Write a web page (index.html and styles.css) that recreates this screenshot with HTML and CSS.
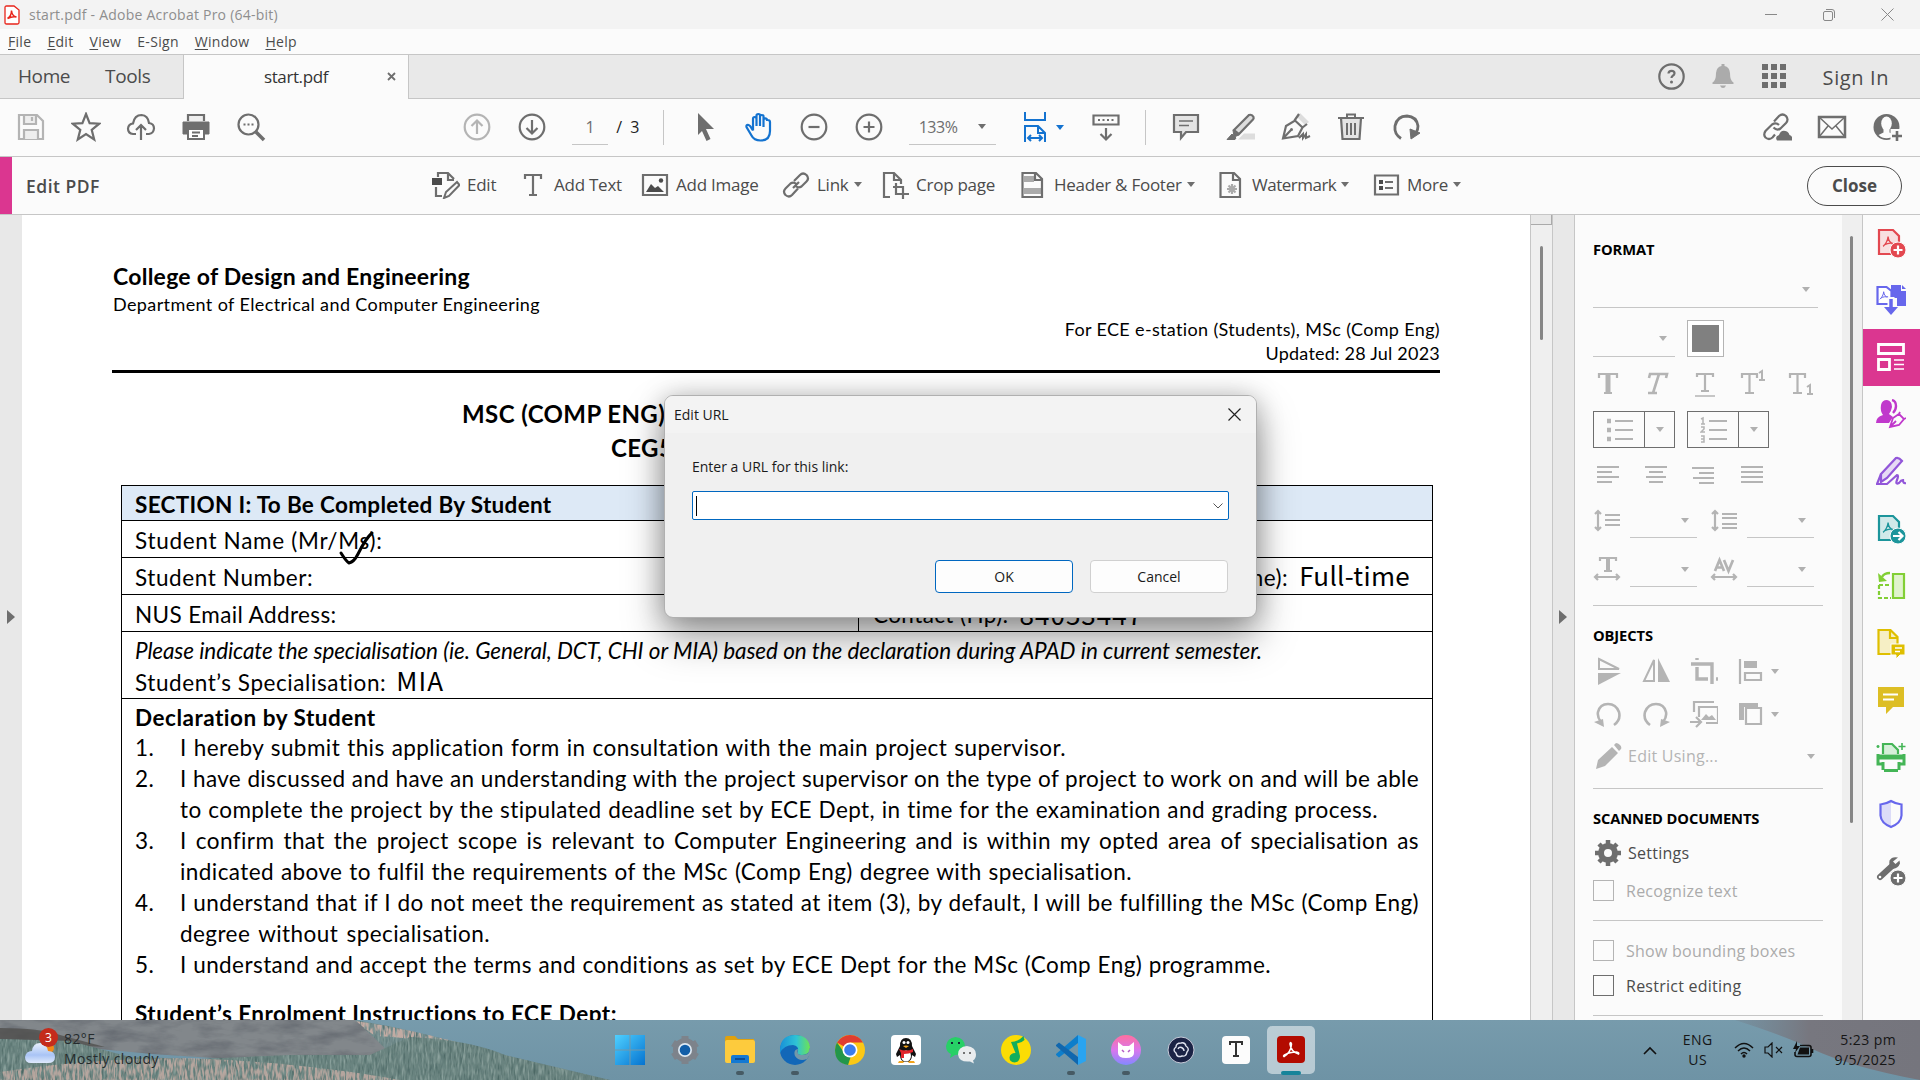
FILE: index.html
```
<!DOCTYPE html>
<html lang="en">
<head>
<meta charset="utf-8">
<title>start.pdf - Adobe Acrobat Pro (64-bit)</title>
<link rel="stylesheet" href="styles.css">
</head>
<body>
<svg width="0" height="0" class="defs">
  <symbol id="arr" viewBox="0 0 8 5"><path d="M0 0h8L4 5z" fill="currentColor"/></symbol>
  <symbol id="pdfmark" viewBox="0 0 12 12"><path d="M1 10.500c2-1.500 4.500-5.500 4.600-9C6 5.500 8 8 11 8M2.500 9C5 7.500 8 7 11 8" fill="none" stroke="currentColor" stroke-width="1.200"/></symbol>
</svg>

<header class="titlebar">
  <svg class="appicon" width="16" height="20" viewBox="0 0 16 20"><path d="M1 2.500Q1 1 2.500 1H10l5 4v12.500q0 1.500-1.500 1.500h-11Q1 19 1 17.500z" fill="#fff" stroke="#e8251b" stroke-width="1.300"/><path d="M3.500 13.500c2.500-1.500 4-5 4-8 .3 4 2 6 5 6.500-3-.8-6 0-9 1.500z" fill="none" stroke="#e8251b" stroke-width="1.500"/></svg>
  <span class="apptitle">start.pdf - Adobe Acrobat Pro (64-bit)</span>
  <div class="winbtns">
    <svg width="12" height="12" viewBox="0 0 12 12"><path d="M0 5.500h12"/></svg>
    <svg width="12" height="12" viewBox="0 0 12 12"><rect x=".5" y="2.500" width="9" height="9" rx="1.500"/><path d="M3 .5h6q2.500 0 2.500 2.500v6"/></svg>
    <svg width="13" height="13" viewBox="0 0 13 13"><path d="M.5.500l12 12M12.500.500l-12 12"/></svg>
  </div>
</header>

<nav class="menubar"><span><u>F</u>ile</span><span><u>E</u>dit</span><span><u>V</u>iew</span><span>E-Sign</span><span><u>W</u>indow</span><span><u>H</u>elp</span></nav>

<div class="tabbar">
  <div class="hometabs"><span>Home</span><span>Tools</span></div>
  <div class="doctab"><span>start.pdf</span><svg width="9" height="9" viewBox="0 0 9 9"><path d="M1 1l7 7M8 1L1 8" stroke="#6e6e6e" stroke-width="1.800"/></svg></div>
  <div class="account">
    <svg class="i-help" width="27" height="27" viewBox="0 0 27 27"><circle cx="13.500" cy="13.500" r="12.200" fill="none" stroke="#6e6e6e" stroke-width="2.200"/><path d="M10.500 10.500q0-2.700 3-2.700t3 2.500q0 1.500-1.700 2.500-1.300.8-1.300 2.300" fill="none" stroke="#6e6e6e" stroke-width="2.200"/><circle cx="13.500" cy="19" r="1.500" fill="#6e6e6e"/></svg>
    <svg class="i-bell" width="22" height="26" viewBox="0 0 22 26"><path d="M9.500 3V1h3v2q5 1 5.500 7 0 8 3.500 9.500V21H.5v-1.500Q4 18 4 10q.5-6 5.500-7zM8 22.500h6q-1 2.500-3 2.500t-3-2.500z" fill="#ababab"/></svg>
    <svg class="i-grid" width="24" height="24" viewBox="0 0 24 24" fill="#6e6e6e"><path d="M0 0h6v6H0zM9 0h6v6H9zM18 0h6v6h-6zM0 9h6v6H0zM9 9h6v6H9zM18 9h6v6h-6zM0 18h6v6H0zM9 18h6v6H9zM18 18h6v6h-6z"/></svg>
    <span>Sign In</span>
  </div>
</div>

<div class="toolbar">
  <div class="cells">
    <svg viewBox="0 0 30 30" class="dim"><path d="M3 3h18l6 6v18H3z"/><path d="M8 4v8h12V4M16 5v4M8 27v-9h14v9" fill="#eee"/></svg>
    <svg viewBox="0 0 30 30"><path d="M15 2l3.600 9.200 9.600.5-7.500 6.200 2.500 9.600-8.200-5.400-8.200 5.400 2.500-9.600-7.500-6.200 9.600-.5z"/></svg>
    <svg viewBox="0 0 30 30"><path d="M10 22H7q-5-.5-5-5.500Q2.500 12 7 11.500 8.500 3 15.500 3 22 3.500 23 11q5 .5 5 5.500-.5 5-5 5.500h-3M15 28V13M10 18l5-5 5 5"/></svg>
    <svg viewBox="0 0 30 30"><path d="M7 9V3h16v6" fill="#eee"/><path d="M2 10h26v12h-5v-5H7v5H2z" fill="currentColor" stroke-width="1"/><path d="M7 17h16v10H7zM11 20.500h8M11 24h6" fill="#fff" stroke-width="2"/></svg>
    <svg viewBox="0 0 30 30"><circle cx="12.500" cy="12.500" r="10"/><path d="M20 20l8 8" stroke-width="3.500"/><path d="M7.500 12.500h2M11.500 12.500h2M15.500 12.500h2" stroke-width="2"/></svg>
  </div>
  <div class="cells pagenav">
    <svg viewBox="0 0 30 30" class="dim"><circle cx="15" cy="15" r="12.300"/><path d="M15 22V9M9.500 14L15 8.500l5.500 5.500"/></svg>
    <svg viewBox="0 0 30 30"><circle cx="15" cy="15" r="12.300"/><path d="M15 8v13M9.500 16l5.500 5.500 5.500-5.500"/></svg>
  </div>
  <div class="pageno">1</div><div class="pagetotal">/ &nbsp;3</div>
  <i class="vsep"></i>
  <div class="cells handset">
    <svg viewBox="0 0 30 30"><path d="M8 1l16 16h-8l4.500 10-4 2L12 19l-4 4z" fill="currentColor" stroke="none"/></svg>
    <svg viewBox="0 0 30 30" class="blue"><path d="M9 18.500V7q0-2 1.700-2T12.500 7v7V3.500Q12.500 2 14.300 2T16 3.500V14 4.500Q16 3 17.800 3t1.700 1.500V15 8q0-1.700 1.700-1.700T23 8h.5Q26 8 26 10v9q0 9.500-9.500 9.500-6.500 0-9-5L2.500 15q-.5-2 1.500-2.200 2 0 5 5.700"/></svg>
    <svg viewBox="0 0 30 30"><circle cx="15" cy="15" r="12.300"/><path d="M9.500 15h11"/></svg>
    <svg viewBox="0 0 30 30"><circle cx="15" cy="15" r="12.300"/><path d="M9.500 15h11M15 9.500v11"/></svg>
  </div>
  <div class="zoom"><span>133%</span><svg class="arrow"><use href="#arr"/></svg></div>
  <div class="fit">
    <svg viewBox="0 0 24 30" width="24" height="30" class="blue ln"><path d="M2 0v8h20V0M2 30V14h13l7 7v9M15 14v7h7M5 26h14M8 23l-3 3 3 3M16 23l3 3-3 3" stroke-width="2"/></svg>
    <svg class="arrow blue"><use href="#arr"/></svg>
    <svg viewBox="0 0 28 30" width="28" height="30" class="ln rul"><path d="M1.500 3.500h25v9h-25zM14 16v11M8.500 22l5.500 5.500 5.500-5.500"/><path d="M6 8h2M10.500 8h2M15 8h2M19.500 8h2" stroke-width="2"/></svg>
  </div>
  <i class="vsep"></i>
  <div class="cells marks">
    <svg viewBox="0 0 30 30"><path d="M3 3h24v17H15l-5 6v-6H3z" fill="#e4e4e4"/><path d="M8 9h14M8 13.500h10" stroke-width="1.500"/></svg>
    <svg viewBox="0 0 30 30"><path d="M12 27.500h17v-6H18z" fill="#ddd" stroke="none"/><path d="M8 18L23 3q3-1 4.500 2 .5 1.500-.5 2.500L13 22z" fill="#ddd"/><path d="M7 18l6 5-5 2zM6 22l4 4-1 1.500H1z" fill="currentColor" stroke-width="1"/></svg>
    <svg viewBox="0 0 30 30"><path d="M19 1l9 9-4 3-8-8z" fill="#ddd" stroke="none"/><path d="M2 26.500L5 14l9-5.500 7.500 7L17 24zM2 26.500l8-8.500M13.500 8.500L18 2M21.500 15.500L26 12"/><circle cx="10.500" cy="17.500" r="1.500" fill="currentColor" stroke="none"/><path d="M18 26l4-4v4l3-4v4l4-2" stroke-width="2"/></svg>
    <svg viewBox="0 0 30 30"><path d="M5 6l1.500 21h17L25 6" fill="#e4e4e4"/><path d="M2 6h26M11 5V2.500h8V5M11 11v12M15 11v12M19 11v12" stroke-width="2"/></svg>
    <svg viewBox="0 0 30 30"><path d="M10 26.500Q3 22 4 14 6 4 16 4q9.500.5 11 10 0 4-2 7" stroke-width="2.800"/><path d="M19 17l10 4-9 6z" fill="currentColor" stroke-width="1"/></svg>
  </div>
  <div class="cells share">
    <svg viewBox="0 0 30 30"><path d="M12 9.500l5-5.500q3.500-3 7 0 3 3.500 0 7l-5.500 5.500q-3.500 2.500-7-1M17 13q-3-3-7-.5L3.500 19q-2.500 3.500 0 6.500 3.500 3 7 0l2.500-3"/><path d="M15 28.500q-2.500-4 2-5.500 2-6 8-3.500 2 1 2.500 3.500 4 1.500 2.500 5.500z" fill="currentColor" stroke="none"/></svg>
    <svg viewBox="0 0 30 30"><path d="M2 5h26v20H2z" stroke-width="2.500"/><path d="M2 5l13 12L28 5M2 25l9-11M28 25l-9-11" stroke-width="1.500"/></svg>
    <svg viewBox="0 0 30 30"><defs><clipPath id="head"><circle cx="14.500" cy="15" r="11.200"/></clipPath></defs><circle cx="14.500" cy="15" r="13" fill="currentColor" stroke="none"/><g clip-path="url(#head)"><ellipse cx="14.500" cy="11.500" rx="5.300" ry="7" fill="#fbfbfb" stroke="none"/><path d="M11.500 16h6v4.500l8 4v6h-22v-6l8-4z" fill="#fbfbfb" stroke="none"/></g><path d="M18.500 17H31v13H18.500z" fill="#fbfbfb" stroke="none"/><path d="M25 19v10M20 24h10" stroke-width="2.600"/></svg>
  </div>
</div>

<div class="editbar">
  <div class="edittitle">Edit PDF</div>
  <div class="edittools">
    <div><svg viewBox="0 0 28 28"><path d="M6 6V2h10l6 6M16 2v7h6M4 16v9h6"/><path d="M0 7h10v7H0z" fill="currentColor" stroke="none"/><path d="M12 27l2-6 11-10 2.500 3-10.500 11z" stroke-width="2"/></svg>Edit</div>
    <div><svg viewBox="0 0 28 28"><path d="M6 8V4h16v4M14 4v20M10 24h8"/></svg>Add Text</div>
    <div><svg viewBox="0 0 28 28"><path d="M2 4h24v20H2z"/><path d="M5 21l5-8 4 4 3-2 6 6z" fill="currentColor" stroke="none"/><circle cx="20" cy="9.500" r="2.200" fill="currentColor" stroke="none"/></svg>Add Image</div>
    <div><svg viewBox="0 0 28 28"><path d="M12 10l6-6q3-3 6.500 0 3 3.500 0 6.500l-5 5q-3 2-6-.5M16 17.500l-6 6.500q-3 3-6.500 0-3-3.500 0-6.500l5-5q3-2 6 .5M11 17l6-6"/></svg>Link<svg class="arrow"><use href="#arr"/></svg></div>
    <div><svg viewBox="0 0 28 28"><path d="M9 26H3V2h10l7 7v4M13 2v7h7M12 16h10v12M15 12v11h13"/></svg>Crop page</div>
    <div><svg viewBox="0 0 28 28"><path d="M5 5h10v6H5zM5 17h17v6H5z" fill="#aaa" stroke="none"/><path d="M3.500 2H17l6 6v18H3.500zM16 2v7h7"/></svg>Header &amp; Footer<svg class="arrow"><use href="#arr"/></svg></div>
    <div class="wm"><svg viewBox="0 0 28 28"><path d="M3.500 2H17l6 6v18H3.500zM16 2v7h7"/><path d="M15 13v10M10 18h10M11.500 14.500l7 7M18.500 14.500l-7 7" stroke="#aaa"/></svg>Watermark<svg class="arrow"><use href="#arr"/></svg></div>
    <div><svg viewBox="0 0 28 28"><path d="M3 4.500h23v19H3zM13 11h8M13 17h8"/><path d="M7 9h4v4H7zM7 15h4v4H7z" fill="currentColor" stroke="none"/></svg>More<svg class="arrow"><use href="#arr"/></svg></div>
  </div>
  <button class="closebtn">Close</button>
</div>

<main class="work">
  <div class="gutter left"><svg width="8" height="14" viewBox="0 0 8 14"><path d="M0 0l8 7-8 7z" fill="#6e6e6e"/></svg></div>
  <article class="page">
    <div class="college">College of Design and Engineering</div>
    <div class="dept">Department of Electrical and Computer Engineering</div>
    <div class="form-ref">For ECE e-station (Students), MSc (Comp Eng)<br><span>Updated: 28 Jul 2023</span></div>
    <div class="doctitle"><div>MSC (COMP ENG)</div><div class="code">CEG5</div></div>
    <div class="form">
      <div class="row section">SECTION I: To Be Completed By Student</div>
      <div class="row name"><span class="fill">Student Name (Mr/Ms):</span><svg class="tick" width="38" height="38" viewBox="0 0 38 38"><path d="M3 24q5 8 8 10 5-1 9-9Q28 9 34 4" fill="none" stroke="#000" stroke-width="3" stroke-linecap="round"/></svg></div>
      <div class="row number"><span>Student Number:</span><span class="mode">(Full-time/Part-time):</span><span class="typed">Full-time</span></div>
      <div class="row nus"><div class="left-cell">NUS Email Address:</div><div class="right-cell">Contact (Hp):<span class="typed hp">84053447</span></div></div>
      <div class="row spec"><div class="note">Please indicate the specialisation (ie. General, DCT, CHI or MIA) based on the declaration during APAD in current semester.</div><div class="specline">Student’s Specialisation:<span class="typed mia">MIA</span></div></div>
      <div class="decl">
        <b>Declaration by Student</b>
        <ol>
          <li><p style="width:886px">I hereby submit this application form in consultation with the main project supervisor.</p></li>
          <li><p class="tight">I have discussed and have an understanding with the project supervisor on the type of project to work on and will be able</p><p style="width:1198px">to complete the project by the stipulated deadline set by ECE Dept, in time for the examination and grading process.</p></li>
          <li><p>I confirm that the project scope is relevant to Computer Engineering and is within my opted area of specialisation as</p><p style="width:952px">indicated above to fulfil the requirements of the MSc (Comp Eng) degree with specialisation.</p></li>
          <li><p>I understand that if I do not meet the requirement as stated at item (3), by default, I will be fulfilling the MSc (Comp Eng)</p><p style="width:310px">degree without specialisation.</p></li>
          <li><p style="width:1091px">I understand and accept the terms and conditions as set by ECE Dept for the MSc (Comp Eng) programme.</p></li>
        </ol>
        <b class="enrol">Student’s Enrolment Instructions to ECE Dept:</b>
      </div>
    </div>
  </article>
  <div class="docscroll"><i class="cap"></i><i class="thumb"></i></div>
  <div class="gutter right"><svg width="8" height="14" viewBox="0 0 8 14"><path d="M0 0l8 7-8 7z" fill="#6e6e6e"/></svg></div>

  <aside class="panel">
    <h3>FORMAT</h3>
    <div class="dd wide"><svg class="arrow"><use href="#arr"/></svg></div>
    <div class="sizerow"><div class="dd"><svg class="arrow"><use href="#arr"/></svg></div><div class="swatch"><i></i></div></div>
    <div class="icons5">
      <svg viewBox="0 0 28 28"><path d="M5 9V5h18v4M10 24h8"/><path d="M14 5v19" stroke-width="5"/></svg>
      <svg viewBox="0 0 28 28"><path d="M7 9l1-4h17l-1 4M17 5l-6 19M6 24h9" stroke-width="2.600"/></svg>
      <svg viewBox="0 0 28 28"><path d="M6 8V5h16v3M14 5v17M10 22h8"/><path d="M4 27h20" stroke-width="1.500"/></svg>
      <svg viewBox="0 0 28 28"><path d="M3 9V5h15v4M10.500 5v19M6 24h9"/><path d="M20 4l3-2v9M20 11h6" stroke-width="2"/></svg>
      <svg viewBox="0 0 28 28"><path d="M3 9V5h15v4M10.500 5v19M6 24h9"/><path d="M20 18l3-2v9M20 25h6" stroke-width="2"/></svg>
    </div>
    <div class="lists">
      <div class="split"><svg viewBox="0 0 28 28"><path d="M9 5h18M9 14h18M9 23h18"/><path d="M1 5h4M1 14h4M1 23h4" stroke-width="4.500"/></svg><span><svg class="arrow"><use href="#arr"/></svg></span></div>
      <div class="split"><svg viewBox="0 0 28 28"><path d="M9 5h18M9 14h18M9 23h18"/><path d="M1 3l2-1v6M1 8h4M1 11h3v2l-3 3h4M1 20h3v6H1M1 23h3" stroke-width="1.500"/></svg><span><svg class="arrow"><use href="#arr"/></svg></span></div>
    </div>
    <div class="icons4 aligns">
      <svg viewBox="0 0 28 28"><path d="M3 6h22M3 11h15M3 16h22M3 21h15"/></svg>
      <svg viewBox="0 0 28 28"><path d="M3 6h22M7 11h14M4 16h20M7 21h14"/></svg>
      <svg viewBox="0 0 28 28"><path d="M2 7h22M9 12h15M3 17h21M9 22h15"/></svg>
      <svg viewBox="0 0 28 28"><path d="M3 6h22M3 11h22M3 16h22M3 21h22"/></svg>
    </div>
    <div class="spacings">
      <svg viewBox="0 0 28 28"><path d="M5 5v19M2 8l3-3 3 3M2 21l3 3 3-3M12 9h15M12 14h15M12 19h15"/></svg><div class="dd"><svg class="arrow"><use href="#arr"/></svg></div>
      <svg viewBox="0 0 28 28"><path d="M5 5v19M2 8l3-3 3 3M2 21l3 3 3-3M12 8h15M12 12h15M12 18h15M12 22h15"/></svg><div class="dd"><svg class="arrow"><use href="#arr"/></svg></div>
      <svg viewBox="0 0 28 28"><path d="M7 6V3h16v3M11 16h8M2 22h24M5 19l-3 3 3 3M23 19l3 3-3 3"/><path d="M15 3v13" stroke-width="4"/></svg><div class="dd"><svg class="arrow"><use href="#arr"/></svg></div>
      <svg viewBox="0 0 28 28"><path d="M5 16L9.500 5 14 16M6.500 12.500h6M14 5l4.500 11L23 5" stroke-width="2.700"/><path d="M2 22h24M5 19l-3 3 3 3M23 19l3 3-3 3"/></svg><div class="dd"><svg class="arrow"><use href="#arr"/></svg></div>
    </div>
    <hr>
    <h3>OBJECTS</h3>
    <div class="icons4 objs">
      <svg viewBox="0 0 28 28"><path d="M5 2l20 10H5z" stroke-width="2"/><path d="M4 16h23L4 28z" fill="currentColor" stroke="none"/></svg>
      <svg viewBox="0 0 28 28"><path d="M12 3v21H2z" stroke-width="2"/><path d="M16 1l12 24H16z" fill="currentColor" stroke="none"/></svg>
      <svg viewBox="0 0 28 28"><path d="M1 7h21v20M7 10v12h11M26 22h2M7 1v2" stroke-width="3.400"/></svg>
      <svg viewBox="0 0 28 28"><path d="M2 2v25M7 16h16v7H7z"/><path d="M6 4h13v7H6z" fill="currentColor" stroke="none"/></svg><svg class="arrow"><use href="#arr"/></svg>
      <svg viewBox="0 0 28 28"><path d="M20 25q7-5 5-13-3-8-11-8-8 0-10 8-1 5 3 10" stroke-width="2.600"/><path d="M0 22l9-3 1 8z" fill="currentColor" stroke="none"/></svg>
      <svg viewBox="0 0 28 28"><path d="M8 25q-7-5-5-13 3-8 11-8 8 0 10 8 1 5-3 10" stroke-width="2.600"/><path d="M28 22l-9-3-1 8z" fill="currentColor" stroke="none"/></svg>
      <svg viewBox="0 0 28 28"><path d="M4 12V2h20M9 17V7h19v16H16M0 22h10M6 17l5 5-5 5"/><path d="M11 20l5-6 3 3 3-2 4 5z" fill="currentColor" stroke="none"/></svg>
      <svg viewBox="0 0 28 28"><path d="M8 8h15v16H8z"/><path d="M1 3h19v4H6v13H1z" fill="currentColor" stroke="none"/></svg><svg class="arrow"><use href="#arr"/></svg>
    </div>
    <div class="using"><svg viewBox="0 0 28 28"><path d="M2 27l2-9L18 5l6 6L11 24zM20 3l2-2q2 0 4 2t1 4l-2 2z" fill="currentColor" stroke="none"/></svg><span>Edit Using...</span><svg class="arrow"><use href="#arr"/></svg></div>
    <hr>
    <h3>SCANNED DOCUMENTS</h3>
    <div class="settings"><svg viewBox="0 0 28 28"><circle cx="14" cy="14" r="7" stroke-width="6"/><path d="M14 1v5M14 22v5M1 14h5M22 14h5M5 5l3 3M20 20l3 3M5 23l3-3M20 8l3-3" stroke-width="4.500"/></svg><span>Settings</span></div>
    <label class="check off"><i></i>Recognize text</label>
    <hr>
    <label class="check off two"><i></i>Show bounding boxes</label>
    <label class="check three"><i></i>Restrict editing</label>
    <hr>
  </aside>
  <div class="panelscroll"><i></i></div>
  <aside class="rail">
    <div style="color:#e34850"><svg viewBox="0 0 30 30"><path d="M3 2h14l6 6v18H3z" fill="#f8dfe0"/><svg x="6" y="7" width="13" height="13"><use href="#pdfmark"/></svg><circle cx="22" cy="22" r="8" fill="currentColor" stroke="#fbfbfb" stroke-width="1"/><path d="M22 17.500v9M17.500 22h9" stroke="#fff"/></svg></div>
    <div style="color:#6767ec"><svg viewBox="0 0 30 30"><path d="M15 0h10v6h5v15h-9v-8h-6z" fill="currentColor" stroke="none"/><path d="M26 0l4 4h-4z" fill="currentColor" stroke="none"/><path d="M1.500 2h9l5 4v13h-14z" fill="#fff"/><svg x="3" y="5" width="10" height="11"><use href="#pdfmark"/></svg><path d="M15 12v15" stroke="#fbfbfb" stroke-width="7"/><path d="M15 14v10" stroke-width="3.500"/><path d="M8 22h14l-7 8z" fill="currentColor" stroke="none"/></svg></div>
    <div class="on"><svg viewBox="0 0 30 30"><path d="M2.500 2.500h25v9h-25zM2.500 17.500h11v10h-11z" stroke-width="2.800"/><path d="M18 18h10M18 22.500h10M18 27h10" stroke-width="1.600"/></svg></div>
    <div style="color:#c038cc"><svg viewBox="0 0 30 30"><path d="M0 24q0-6 7-8-3-4-2-10 1-5 6-5 5 1 5 7-1 5-3 7l4 3-4 6z" fill="currentColor" stroke="none"/><path d="M16 1q4 1 4 6 0 4-3 7" stroke-width="2.400"/><path d="M14 28l3-9 6-4 5 5-5 6zM14 28l6-6M23 15l1-2M28 20l2-1" stroke-width="1.800" fill="#fbfbfb"/></svg></div>
    <div style="color:#9256d9"><svg viewBox="0 0 30 30"><path d="M5 18L20 2q3-1 6 3L11 22l-6 4z" fill="#e6daf5"/><path d="M5 18L1 28h10l10-9q2 0 0 5t2 3q2-3 4-3 0 4 3 3"/></svg></div>
    <div style="color:#1c959b"><svg viewBox="0 0 30 30"><path d="M3 2h14l6 6v18H3z" fill="#d0e9e9"/><svg x="6" y="7" width="13" height="13"><use href="#pdfmark"/></svg><circle cx="22" cy="22" r="8" fill="currentColor" stroke="#fbfbfb" stroke-width="1"/><path d="M17 22h9M22.500 18l4 4-4 4" stroke="#fff"/></svg></div>
    <div style="color:#82cf35"><svg viewBox="0 0 30 30"><path d="M17 3h11v24H17z" fill="#e0f3cd"/><path d="M3 14h10M3 14v13h12" stroke-dasharray="4 2"/><path d="M14 2Q8 2 6 6" stroke-width="2.500"/><path d="M2 2l1 9 8-1z" fill="currentColor" stroke="none"/></svg></div>
    <div style="color:#dfbf00"><svg viewBox="0 0 30 30"><path d="M2.500 2h12l7 7v17h-19z" fill="#f6efc5"/><path d="M14 2v8h8" /><path d="M15 16h14v11h-5l-4 4v-4h-5z" fill="currentColor" stroke="#fbfbfb" stroke-width="1"/><path d="M19 20h7M19 23.500h5" stroke="#fff" stroke-width="1.500"/></svg></div>
    <div style="color:#ddbe24"><svg viewBox="0 0 30 30"><path d="M2 2h26v20H17l-7 7v-7H2z" fill="currentColor" stroke="none"/><path d="M7 9.500h15M7 14.500h11" stroke="#fff" stroke-width="2"/></svg></div>
    <div style="color:#44b556"><svg viewBox="0 0 30 30"><path d="M7 12V2h9l6 6v4" fill="#d5efd9"/><path d="M2 12v10h4M28 12v10h-4M7 20v8M23 20v8M8 28.500h14" stroke-width="3"/><path d="M1 15h28" stroke-width="5"/><path d="M26 1v7M22.500 4.500h7M2 3v3M.5 4.500h3" stroke-width="1.600"/></svg></div>
    <div style="color:#6767ec"><svg viewBox="0 0 30 30"><path d="M15 2L4.500 5.500v11Q5 24 15 28z" fill="#dcdcf8" stroke="none"/><path d="M15 2q5 3 10.500 3.500v11Q25 24 15 28 5 24 4.500 16.500v-11Q10 5 15 2z"/></svg></div>
    <div style="color:#6e6e6e"><svg viewBox="0 0 30 30"><path d="M4 21L16 10" stroke-width="6" stroke-linecap="round"/><path d="M22 1.500q-6-1.500-8.500 3-1 5 2.500 8 5.500 1 8-5l-.5-3-4 3.500-2.500-2.500z" fill="currentColor" stroke="none"/><circle cx="4" cy="21" r="1.300" fill="#fff" stroke="none"/><circle cx="22" cy="22" r="8" fill="currentColor" stroke="#fbfbfb" stroke-width="1"/><path d="M22 17.500v9M17.500 22h9" stroke="#fff"/></svg></div>
  </aside>
</main>

<section class="dialog">
  <div class="dtitle"><span>Edit URL</span><svg width="13" height="13" viewBox="0 0 13 13"><path d="M.5.500l12 12M12.500.500l-12 12" stroke="#222" stroke-width="1.200"/></svg></div>
  <div class="dbody">
    <div class="dlabel">Enter a URL for this link:</div>
    <div class="combo"><i></i><svg width="10" height="6" viewBox="0 0 10 6"><path d="M.5.500L5 5l4.500-4.500" fill="none" stroke="#555"/></svg></div>
    <div class="dbtns"><button class="ok">OK</button><button>Cancel</button></div>
  </div>
</section>

<footer class="taskbar">
  <svg class="wall" viewBox="0 0 1920 60" width="1920" height="60">
    <defs>
      <linearGradient id="sky" x1="0" y1="0" x2="0" y2="1"><stop offset="0" stop-color="#779bac"/><stop offset="1" stop-color="#6e93a5"/></linearGradient>
      <linearGradient id="patch" x1="0" y1="0" x2="1" y2="0"><stop offset="0" stop-color="#747f8b" stop-opacity=".3"/><stop offset=".4" stop-color="#77777f"/><stop offset="1" stop-color="#75757d"/></linearGradient>
      <filter id="blades" x="0" y="0" width="1" height="1" color-interpolation-filters="sRGB"><feTurbulence type="fractalNoise" baseFrequency=".5 .09" numOctaves="2" seed="4"/><feColorMatrix values="0 0 0 0 .6  0 0 0 0 .68  0 0 0 0 .66  2 0 0 0 -.9"/><feComposite in2="SourceGraphic" operator="in" result="hi"/><feTurbulence type="fractalNoise" baseFrequency=".5 .09" numOctaves="2" seed="11"/><feColorMatrix values="0 0 0 0 .28  0 0 0 0 .39  0 0 0 0 .38  2 0 0 0 -.9"/><feComposite in2="SourceGraphic" operator="in" result="lo"/><feMerge><feMergeNode in="SourceGraphic"/><feMergeNode in="lo"/><feMergeNode in="hi"/></feMerge></filter>
      <filter id="straw" x="0" y="0" width="1" height="1" color-interpolation-filters="sRGB"><feTurbulence type="fractalNoise" baseFrequency=".45 .1" numOctaves="2" seed="7"/><feColorMatrix values="0 0 0 0 .76  0 0 0 0 .67  0 0 0 0 .64  4 0 0 0 -1.500"/><feComposite in2="SourceGraphic" operator="in"/></filter>
      <filter id="stone" x="0" y="0" width="1" height="1" color-interpolation-filters="sRGB"><feTurbulence type="fractalNoise" baseFrequency=".03 .09" numOctaves="4" seed="3"/><feColorMatrix values="0 0 0 0 .36  0 0 0 0 .38  0 0 0 0 .41  1.500 0 0 0 -.6"/><feComposite in2="SourceGraphic" operator="in" result="s"/><feMerge><feMergeNode in="SourceGraphic"/><feMergeNode in="s"/></feMerge></filter>
    </defs>
    <rect width="1920" height="60" fill="url(#sky)"/>
    <path d="M355 0q60 10 130 30 60 18 120 30H330V0z" fill="#718b8c" filter="url(#blades)"/>
    <path d="M355 1q60 8 125 28l-30-3q-40-9-75-10z" filter="url(#straw)"/>
    <path d="M0 0h355q20 18 38 36l-60 8-90-4-90-6L0 20z" fill="#82878b" filter="url(#stone)"/>
    <path d="M0 8q40 0 60 7l45 12-105-5z" fill="#4d4c4a" opacity=".75"/>
    <path d="M0 19l70 2 60 16 70 2 90-4 80 0 40-18q60 3 95 18l105 25H0z" fill="#69837f" filter="url(#blades)"/>
    <path d="M0 52q90-14 190-14 120 5 210 22H0z" filter="url(#straw)" opacity=".85"/>
    <path d="M1735 0h185v60q-70-13-110-32-25-12-75-28z" fill="url(#patch)"/>
  </svg>
  <div class="weather">
    <svg width="36" height="34" viewBox="0 0 36 34"><circle cx="25" cy="15" r="5" fill="#f28a18"/><path d="M7 30q-6 0-6-6 1-6 7-6 1-8 8-8 7 1 8 8 7 0 7 6t-7 6z" fill="url(#cl)"/><defs><linearGradient id="cl" x1="0" y1="0" x2="0" y2="1"><stop offset="0" stop-color="#e8f0fd"/><stop offset=".6" stop-color="#a9c4f5"/><stop offset="1" stop-color="#dfe9fc"/></linearGradient></defs></svg>
    <b>3</b>
    <div>82°F<br>Mostly cloudy</div>
  </div>
  <div class="apps">
    <div><svg viewBox="0 0 30 30"><defs><linearGradient id="w" x1="0" y1="0" x2="1" y2="1"><stop offset="0" stop-color="#4fd0ff"/><stop offset="1" stop-color="#0573d0"/></linearGradient></defs><path d="M0 0h14.500v14.500H0zM15.500 0H30v14.500H15.500zM0 15.500h14.500V30H0zM15.500 15.500H30V30H15.500z" fill="url(#w)"/></svg></div>
    <div><svg viewBox="0 0 30 30"><circle cx="15" cy="15" r="9" fill="none" stroke="#7d838b" stroke-width="6"/><path d="M15 1v5M15 24v5M3 8l4 2.500M23 19.500l4 2.500M3 22l4-2.500M23 10.500L27 8" stroke="#7d838b" stroke-width="7"/><circle cx="15" cy="15" r="7" fill="#dce8f2"/><circle cx="15" cy="15" r="5.300" fill="#115ea8"/></svg></div>
    <div class="run"><svg viewBox="0 0 30 30"><path d="M0 3q0-2 2-2h8l3 3h16v10H0z" fill="#e0a10c"/><rect y="5" width="30" height="23" rx="2" fill="#fdcb3d"/><path d="M6 28v-6q0-2 2-2h14q2 0 2 2v6z" fill="#1479d2"/><path d="M10 24h10" stroke="#0a4e96" stroke-width="2"/></svg></div>
    <div class="run"><svg viewBox="0 0 30 30"><defs><linearGradient id="e" x1="0" y1="0" x2="1" y2="0"><stop offset="0" stop-color="#1891d8"/><stop offset=".55" stop-color="#2fc3d5"/><stop offset="1" stop-color="#6de354"/></linearGradient></defs><circle cx="15" cy="15" r="15" fill="#1267b8"/><path d="M0 14Q1 0 15 0q13 0 15 12 0 8-8 8-6 0-4-4 1-5-5-6Q4 10 0 18z" fill="url(#e)"/><path d="M18 14q-5 1-3 7 4 6 12 3l2-3q3-4 0-8 1 7-7 7-6 0-4-6z" fill="#7398a9"/></svg></div>
    <div><svg viewBox="0 0 30 30"><circle cx="15" cy="15" r="15" fill="#fbc816"/><path d="M15 15L2 7.500Q7 0 15 0q9 0 13 7.500H15z" fill="#e03d30"/><path d="M2 7.500L11 20l5 1-3 9Q0 28 0 15q0-4 2-7.500z" fill="#23964a"/><circle cx="15" cy="15" r="7.500" fill="#fff"/><circle cx="15" cy="15" r="5.800" fill="#3a7cec"/></svg></div>
    <div><svg viewBox="0 0 30 30"><rect width="30" height="30" rx="4" fill="#fff"/><path d="M8 26h6l-2 2H7zM16 26h7l1 2h-6z" fill="#f2a51d"/><path d="M15 3q6 0 6 8l4 8-1 3-3-2q0 7-6 7t-6-7l-3 2-1-3 4-8q0-8 6-8z" fill="#111"/><ellipse cx="15" cy="21" rx="5" ry="5.500" fill="#fff"/><path d="M12 11q3-1 6 0l-3 2z" fill="#f2a51d"/><path d="M8 14q7 3 14 0v3q-4 2-9 2v4h-3v-5z" fill="#e1242b"/><circle cx="13" cy="7.500" r="1.500" fill="#fff"/><circle cx="17" cy="7.500" r="1.500" fill="#fff"/></svg></div>
    <div><svg viewBox="0 0 30 30"><path d="M9.500 2Q19 3 19 12q-1 8-10 8l-5 3 1-4q-5-2-5-8 1-8 9.500-9z" fill="#27d066"/><path d="M21 11q9 1 9 8.500 0 4-3 6l1 3-4-2q-11 1-12-7 0-8 9-8.500z" fill="#e9ecee"/><path d="M6 7v2M13 7v2" stroke="#123" stroke-width="2"/><path d="M18 17v2M24 17v2" stroke="#555" stroke-width="1.600"/></svg></div>
    <div><svg viewBox="0 0 30 30"><circle cx="15" cy="15" r="15" fill="#fbdc05"/><path d="M14.500 18L10 7q7 0 12.500-6l1 4q-3 3-7.500 3.500L19 21q0 6-5.500 6.500-5-.5-5-5 .5-4.500 6-4.500z" fill="#12ae5b"/></svg></div>
    <div class="run"><svg viewBox="0 0 30 30"><path d="M0 20l3 2.500L22 8V0L0 19z" fill="#0d7ecb"/><path d="M0 10l3-2.500L22 22v8L0 11z" fill="#1067ae"/><path d="M22 0l8 4v22l-8 4z" fill="#2aa4f0"/></svg></div>
    <div class="run"><svg viewBox="0 0 30 30"><defs><linearGradient id="c" x1="0" y1="0" x2="0" y2="1"><stop offset="0" stop-color="#ff6f9f"/><stop offset=".5" stop-color="#d977ed"/><stop offset="1" stop-color="#8488ff"/></linearGradient></defs><circle cx="15" cy="15" r="15" fill="url(#c)"/><path d="M7 7l5 4h6l5-4v11q0 5-8 5t-8-5z" fill="#fff"/><path d="M11 15l2 2M19 15l-2 2" stroke="#b45cc5" stroke-width="1.500"/></svg></div>
    <div><svg viewBox="0 0 30 30"><circle cx="15" cy="15" r="13" fill="#1b2345" stroke="#c7cbd9" stroke-width="1"/><path d="M15 8q4-1 5 3 4 3 1 6-1 5-5 4-5 2-6-3-4-3 0-6 0-4 5-4z" fill="none" stroke="#dfe2ee" stroke-width="1.400"/><path d="M12 14q1-2.500 3.500-1.500T18 16" fill="none" stroke="#dfe2ee" stroke-width="1.400"/></svg></div>
    <div><svg viewBox="0 0 30 30"><rect x="1" y="1" width="28" height="28" rx="4" fill="#fcfcfc"/><path d="M9 10V7h12v3M15 7v14M12 21h6" stroke="#333" stroke-width="2" fill="none"/></svg></div>
    <div class="active"><svg viewBox="0 0 30 30"><rect x="1" y="1" width="28" height="27" rx="4" fill="#b30b00"/><path d="M8 21.500q7-4 7.500-12.500Q14.500 6 14 9q1 8 8.500 10 1-1.500-2-2-7 0-12 3-1.500 1-.5 1.500z" fill="none" stroke="#fff" stroke-width="1.600"/></svg></div>
  </div>
  <div class="tray">
    <svg class="chev" width="14" height="9" viewBox="0 0 14 9"><path d="M1 8l6-6 6 6" fill="none" stroke="#111" stroke-width="1.600"/></svg>
    <div class="lang">ENG<br>US</div>
    <svg class="wifi" width="20" height="16" viewBox="0 0 20 16"><path d="M1 6q9-9 18 0M4 9q6-6 12 0M7 12q3-3 6 0" fill="none" stroke="#111" stroke-width="1.500"/><circle cx="10" cy="14" r="1.700" fill="#111"/></svg>
    <svg class="snd" width="20" height="16" viewBox="0 0 20 16"><path d="M1 5h3l4-4v14l-4-4H1zM12 5l6 6M18 5l-6 6" fill="none" stroke="#111" stroke-width="1.200"/></svg>
    <svg class="bat" width="21" height="18" viewBox="0 0 21 18"><path d="M7 4.500h9q2 0 2 2v7q0 2-2 2H4q-2 0-2-2V11M19.500 8v4" fill="none" stroke="#111" stroke-width="1.600"/><path d="M7 6.500h9v7H4.500zM4 0L0 8h3l-1 4 5-7H4z" fill="#111"/></svg>
    <div class="clock">5:23 pm<br>9/5/2025</div>
  </div>
</footer>
</body>
</html>
```
FILE: styles.css
```
*{box-sizing:border-box}
body{margin:0;width:1920px;height:1080px;overflow:hidden;display:flex;flex-direction:column;position:relative;background:#fbfbfb;font-family:"Open Sans","Noto Sans",sans-serif;color:#4b4b4b;white-space:nowrap}
.defs{position:absolute}
svg{display:block;flex:none}
i{display:block}
.arrow{width:8px;height:5px;color:#6e6e6e}
.blue{color:#1473d0 !important}

.titlebar{height:29px;background:#f3f3f3;display:flex;align-items:center;padding:0 26px 0 4px;flex:none}
.apptitle{margin-left:9px;font-size:14px;letter-spacing:.23px;color:#8e8e8e}
.winbtns{margin-left:auto;display:flex;gap:46px;align-items:center;fill:none;stroke:#888}
.menubar{height:25px;flex:none;display:flex;padding:1px 8px 0;font-size:14px;line-height:24px;letter-spacing:.3px;gap:16px}
.menubar u{text-underline-offset:2px}

.tabbar{height:45px;flex:none;display:flex;background:#e9e9e9;border-top:1px solid #c6c6c6}
.hometabs{width:184px;display:flex;gap:35px;padding-left:18px;border-right:1px solid #c6c6c6;border-bottom:1px solid #c6c6c6;font-size:19px;line-height:43px;letter-spacing:-.4px}
.doctab{width:225px;background:#fbfbfb;border-right:1px solid #c6c6c6;display:flex;align-items:center;padding:0 12px 2px 80px;justify-content:space-between;font-size:17px;letter-spacing:-.4px;color:#333}
.account{flex:1;border-bottom:1px solid #c6c6c6;display:flex;align-items:center;justify-content:flex-end;padding:0 31px 1px 0;font-size:20px;letter-spacing:.6px}
.i-bell{margin-left:27px}
.i-grid{margin-left:28px}
.account span{margin-left:37px;padding-top:2px}

.toolbar{height:57px;flex:none;display:flex;align-items:center;padding:0 6px 1px 4px;color:#6e6e6e;font-size:16px}
.cells{display:flex}
.cells svg{width:30px;height:30px;margin:0 12.450px;fill:none;stroke:currentColor;stroke-width:2.200}
.cells .dim{color:#b4b4b4}
.ln{fill:none;stroke:currentColor;stroke-width:2.200}
.pagenav{margin-left:171px}
.pageno{width:36px;height:35px;border-bottom:1px solid #c6c6c6;margin-left:13px;text-align:center;line-height:34px}
.pagetotal{width:46px;padding-left:8px;color:#222}
.vsep{width:1px;height:35px;background:#c6c6c6}
.pagetotal+.vsep{margin-left:9px}
.handset{margin-left:13px}
.zoom{width:87px;height:35px;border-bottom:1px solid #c6c6c6;margin-left:12px;display:flex;align-items:center;padding:0 10px;justify-content:space-between;letter-spacing:-.4px}
.fit{display:flex;align-items:center;margin-left:27px}
.fit .arrow{margin-left:9px}
.rul{margin:0 25px 0 28px}
.marks{margin-left:13px}
.share{margin-left:auto}

.editbar{height:59px;flex:none;display:flex;align-items:center;border:solid #c6c6c6;border-width:1px 0;font-size:17px}
.edittitle{width:432px;height:57px;border-left:12px solid #db3690;padding-left:14px;line-height:58px;font-size:17.500px;font-weight:600;letter-spacing:.5px}
.edittools{display:grid;grid-template-columns:87px 122px 141px 99px 138px 198px 155px 90px;letter-spacing:-.25px;padding-bottom:2px}
.edittools div{display:flex;align-items:center}
.edittools div>svg:first-child{width:28px;height:28px;margin-right:7px;fill:none;stroke:#6e6e6e;stroke-width:2.200}
.edittools .wm{letter-spacing:-.5px}
.edittools .arrow{margin-left:5px}
.closebtn{margin-left:auto;margin-right:18px;width:95px;height:40px;border:1.500px solid #4b4b4b;border-radius:20px;background:none;font:700 17px "Open Sans",sans-serif;color:#4b4b4b;padding:0}

.work{height:805px;flex:none;display:flex;overflow:hidden}
.gutter{background:#e8e8e8;width:22px;padding:395px 0 0 7px;flex:none}
.gutter.right{width:23px;border:solid #c6c6c6;border-width:0 1px;padding-left:6px}
.page{width:1508px;flex:none;background:#fff;padding:47px 90px 0 91px;color:#000;font-family:Lato,sans-serif}
.college{font-size:23px;line-height:28px;font-weight:700;letter-spacing:.25px}
.dept{font-size:18px;line-height:24px;letter-spacing:.39px;margin-top:2px}
.form-ref{font-size:18px;line-height:24px;letter-spacing:.35px;text-align:right;width:1328px;height:57px;padding-top:1px;border-bottom:3px solid #000;margin-left:-1px}
.form-ref span{letter-spacing:.22px}
.doctitle{font-size:24px;font-weight:700;line-height:34px;letter-spacing:.4px;padding:24px 0 0 349px}
.doctitle .code{padding-left:149px}
.form{width:1312px;height:560px;margin:20px 0 0 8px;border:1px solid #000;font-size:22.500px;line-height:31px;letter-spacing:.5px}
.row{height:37px;border-bottom:1px solid #000;padding:4px 0 0 13px;display:flex;position:relative}
.row.section{height:35px;background:#dde9f6;font-weight:700;padding-top:3px;letter-spacing:.32px}
.row.number{letter-spacing:.6px}
.row.name{letter-spacing:.7px}
.tick{position:absolute;left:216px;top:8px}
.mode{margin-left:auto;letter-spacing:.48px}
.typed{font:26px/31px "Noto Sans CJK SC","Noto Sans",sans-serif;letter-spacing:.3px;margin:-3px 22px 0 11px}
.row.nus{padding-top:0}
.left-cell{width:724px;padding-top:4px;border-right:1px solid #000;letter-spacing:.38px}
.right-cell{padding:4px 0 0 14px;display:flex;letter-spacing:.4px}
.typed.hp{letter-spacing:1px;margin-top:-1px}
.row.spec{height:67px;display:block;padding-top:1.500px}
.note{width:1127px;font-style:italic;letter-spacing:-.12px;line-height:33px;text-align-last:justify}
.specline{display:flex;letter-spacing:.58px}
.typed.mia{letter-spacing:1.200px;margin-left:10px}
.decl{padding:4px 0 0 13px}
.decl b{display:block;line-height:30px;letter-spacing:.52px}
ol{list-style:none;counter-reset:n;margin:-1px 0 0;padding:0}
li{counter-increment:n;position:relative;padding-left:45px}
li::before{content:counter(n) ".";position:absolute;left:0}
li p{margin:0;width:1239px;text-align-last:justify;letter-spacing:.42px}
li p.tight{letter-spacing:.34px}
.decl .enrol{margin-top:19px;letter-spacing:.48px}

.docscroll{width:22px;background:#efefef;border-left:1px solid #c6c6c6;flex:none}
.docscroll .cap{height:10px;border:solid #aaa;border-width:0 1px 1px 0;background:#e8e8e8}
.docscroll .thumb{width:3px;height:94px;margin:21px 0 0 9px;background:#868686;border-radius:2px}

.panel{width:267px;flex:none;padding-left:18px;color:#b4b4b4;font-size:16px;letter-spacing:.25px}
.panel svg:not(.arrow){width:28px;height:28px;fill:none;stroke:currentColor;stroke-width:2.200}
.panel .arrow{color:#b0b0b0}
.panel h3{margin:0;font-size:14.700px;font-weight:700;letter-spacing:-.1px;color:#000;line-height:20px}
.panel>h3:first-child{padding-top:24px}
.panel hr{border:0;border-top:1px solid #c6c6c6;margin:0;width:230px}
.dd{border-bottom:1px solid #c6c6c6;display:flex;align-items:center;justify-content:flex-end;padding-right:8px;height:37px}
.dd.wide{width:225px;margin-top:12px}
.sizerow{display:flex;margin-top:12px;gap:12px}
.sizerow .dd{width:82px}
.swatch{width:37px;height:37px;border:1px solid #b4b4b4;padding:4px;background:#fff}
.swatch i{width:27px;height:27px;background:#808080}
.icons5{display:grid;grid-template-columns:repeat(5,48.300px);margin-top:12px;padding-left:1px}
.lists{display:flex;gap:12px;margin-top:14px}
.split{width:82px;height:37px;border:1px solid #6e6e6e;display:flex;align-items:center;padding-left:12px}
.split>span{margin-left:auto;width:30px;height:35px;border-left:1px solid #6e6e6e;display:flex;align-items:center;justify-content:center}
.icons4{display:grid;grid-template-columns:repeat(3,48px) 33px 20px;align-items:center;padding-left:1px}
.aligns{margin-top:13px}
.aligns svg:last-child{grid-column:4 / 6}
.spacings{display:grid;grid-template-columns:37px 67px 50px 67px;grid-auto-rows:49px;margin-top:14px}
.spacings>svg{margin-top:3px}
.spacings>svg:nth-of-type(even){margin-left:13px}
.spacings .dd{height:35px}
.panel .spacings+hr{margin-top:4px}
.panel hr+h3{padding-top:19px}
.objs{margin-top:12px;row-gap:15px}
.using{display:flex;align-items:center;margin-top:14px;height:28px}
.using svg:first-child,.settings svg{margin-left:1px}
.using span,.settings span{margin-left:6px}
.using .arrow{margin-left:89px}
.using+hr{margin-top:18px !important}
.settings{display:flex;align-items:center;margin-top:11px;color:#6e6e6e}
.settings span{color:#4b4b4b}
.check{display:flex;align-items:center;gap:12px;height:21px;margin:13px 0 19px;color:#4b4b4b}
.check i{width:21px;height:21px;border:1.500px solid #6e6e6e}
.check.off{color:#ababab}
.check.off i{border-color:#b4b4b4}
.check.two{margin:19px 0 14px}
.check.three{margin-top:0}
.panelscroll{width:21px;background:#efefef;border-right:1px solid #c6c6c6;padding:21px 0 0 8px;flex:none}
.panelscroll i{width:3px;height:587px;border-radius:2px;background:#868686}
.rail{width:57px;flex:none}
.rail div{height:57.100px;display:flex;align-items:center;justify-content:center;padding:0 2px 1px 0}
.rail .on{background:#db3690;color:#fff}
.rail div>svg{width:30px;height:30px;fill:none;stroke:currentColor;stroke-width:2.200}

.dialog{position:absolute;left:664px;top:395px;width:593px;height:223px;background:#f0f0f0;border:1px solid #b0b0b0;border-radius:9px;box-shadow:0 20px 40px rgba(0,0,0,.35),0 2px 26px rgba(0,0,0,.25);color:#1a1a1a;font-size:14px}
.dtitle{height:37px;background:#f3f3f3;border-radius:8px 8px 0 0;display:flex;align-items:center;justify-content:space-between;padding:0 15px 0 9px}
.dbody{padding:23px 27px 0 27px}
.dlabel{line-height:22px}
.combo{height:29px;margin-top:13px;background:#fff;border:1px solid #0067c0;border-radius:2px;display:flex;align-items:center;justify-content:space-between;padding:0 5px 0 3px}
.combo i{width:1px;height:20px;background:#000}
.dbtns{display:flex;justify-content:flex-end;gap:17px;margin:40px 1px 0 0}
.dbtns button{width:138px;height:33px;background:#fdfdfd;border:1px solid #d0d0d0;border-radius:4px;font:14px "Open Sans",sans-serif;color:#1a1a1a}
.dbtns .ok{border:1.500px solid #0067c0}

.taskbar{height:60px;flex:none;position:relative;display:flex;font-size:14px;line-height:20px;letter-spacing:.4px;color:#151515}
.wall{position:absolute;left:0;top:0}
.weather,.apps,.tray{position:relative;display:flex}
.weather{width:602.500px;padding-left:24px;color:#252b2d}
.weather svg{margin-top:13px}
.weather b{position:absolute;left:39px;top:8px;width:19px;height:19px;border-radius:50%;background:#c42b1c;color:#fff;font:12px/19px "Open Sans",sans-serif;text-align:center;letter-spacing:0}
.weather div{padding:9px 0 0 4px}
.apps>div{width:55.120px;height:60px;display:flex;justify-content:center;padding-top:15px;position:relative}
.apps svg{width:30px;height:30px;position:relative}
.apps .run::after,.apps .active::after{content:"";position:absolute;top:51px;width:8px;height:4px;border-radius:2px;background:#465a64}
.apps .active::after{width:20px;background:#16849a}
.apps .active::before{content:"";position:absolute;left:3.500px;top:6px;width:48px;height:48px;border-radius:5px;background:rgba(255,255,255,.5)}
.tray{margin-left:auto;padding-right:24px;align-items:center}
.chev{margin-right:1px}
.lang{text-align:center;margin:0 0 0 25px}
.wifi{margin-left:21px}
.snd{margin-left:10px}
.bat{margin-left:9px}
.clock{text-align:right;margin-left:21px}
```
